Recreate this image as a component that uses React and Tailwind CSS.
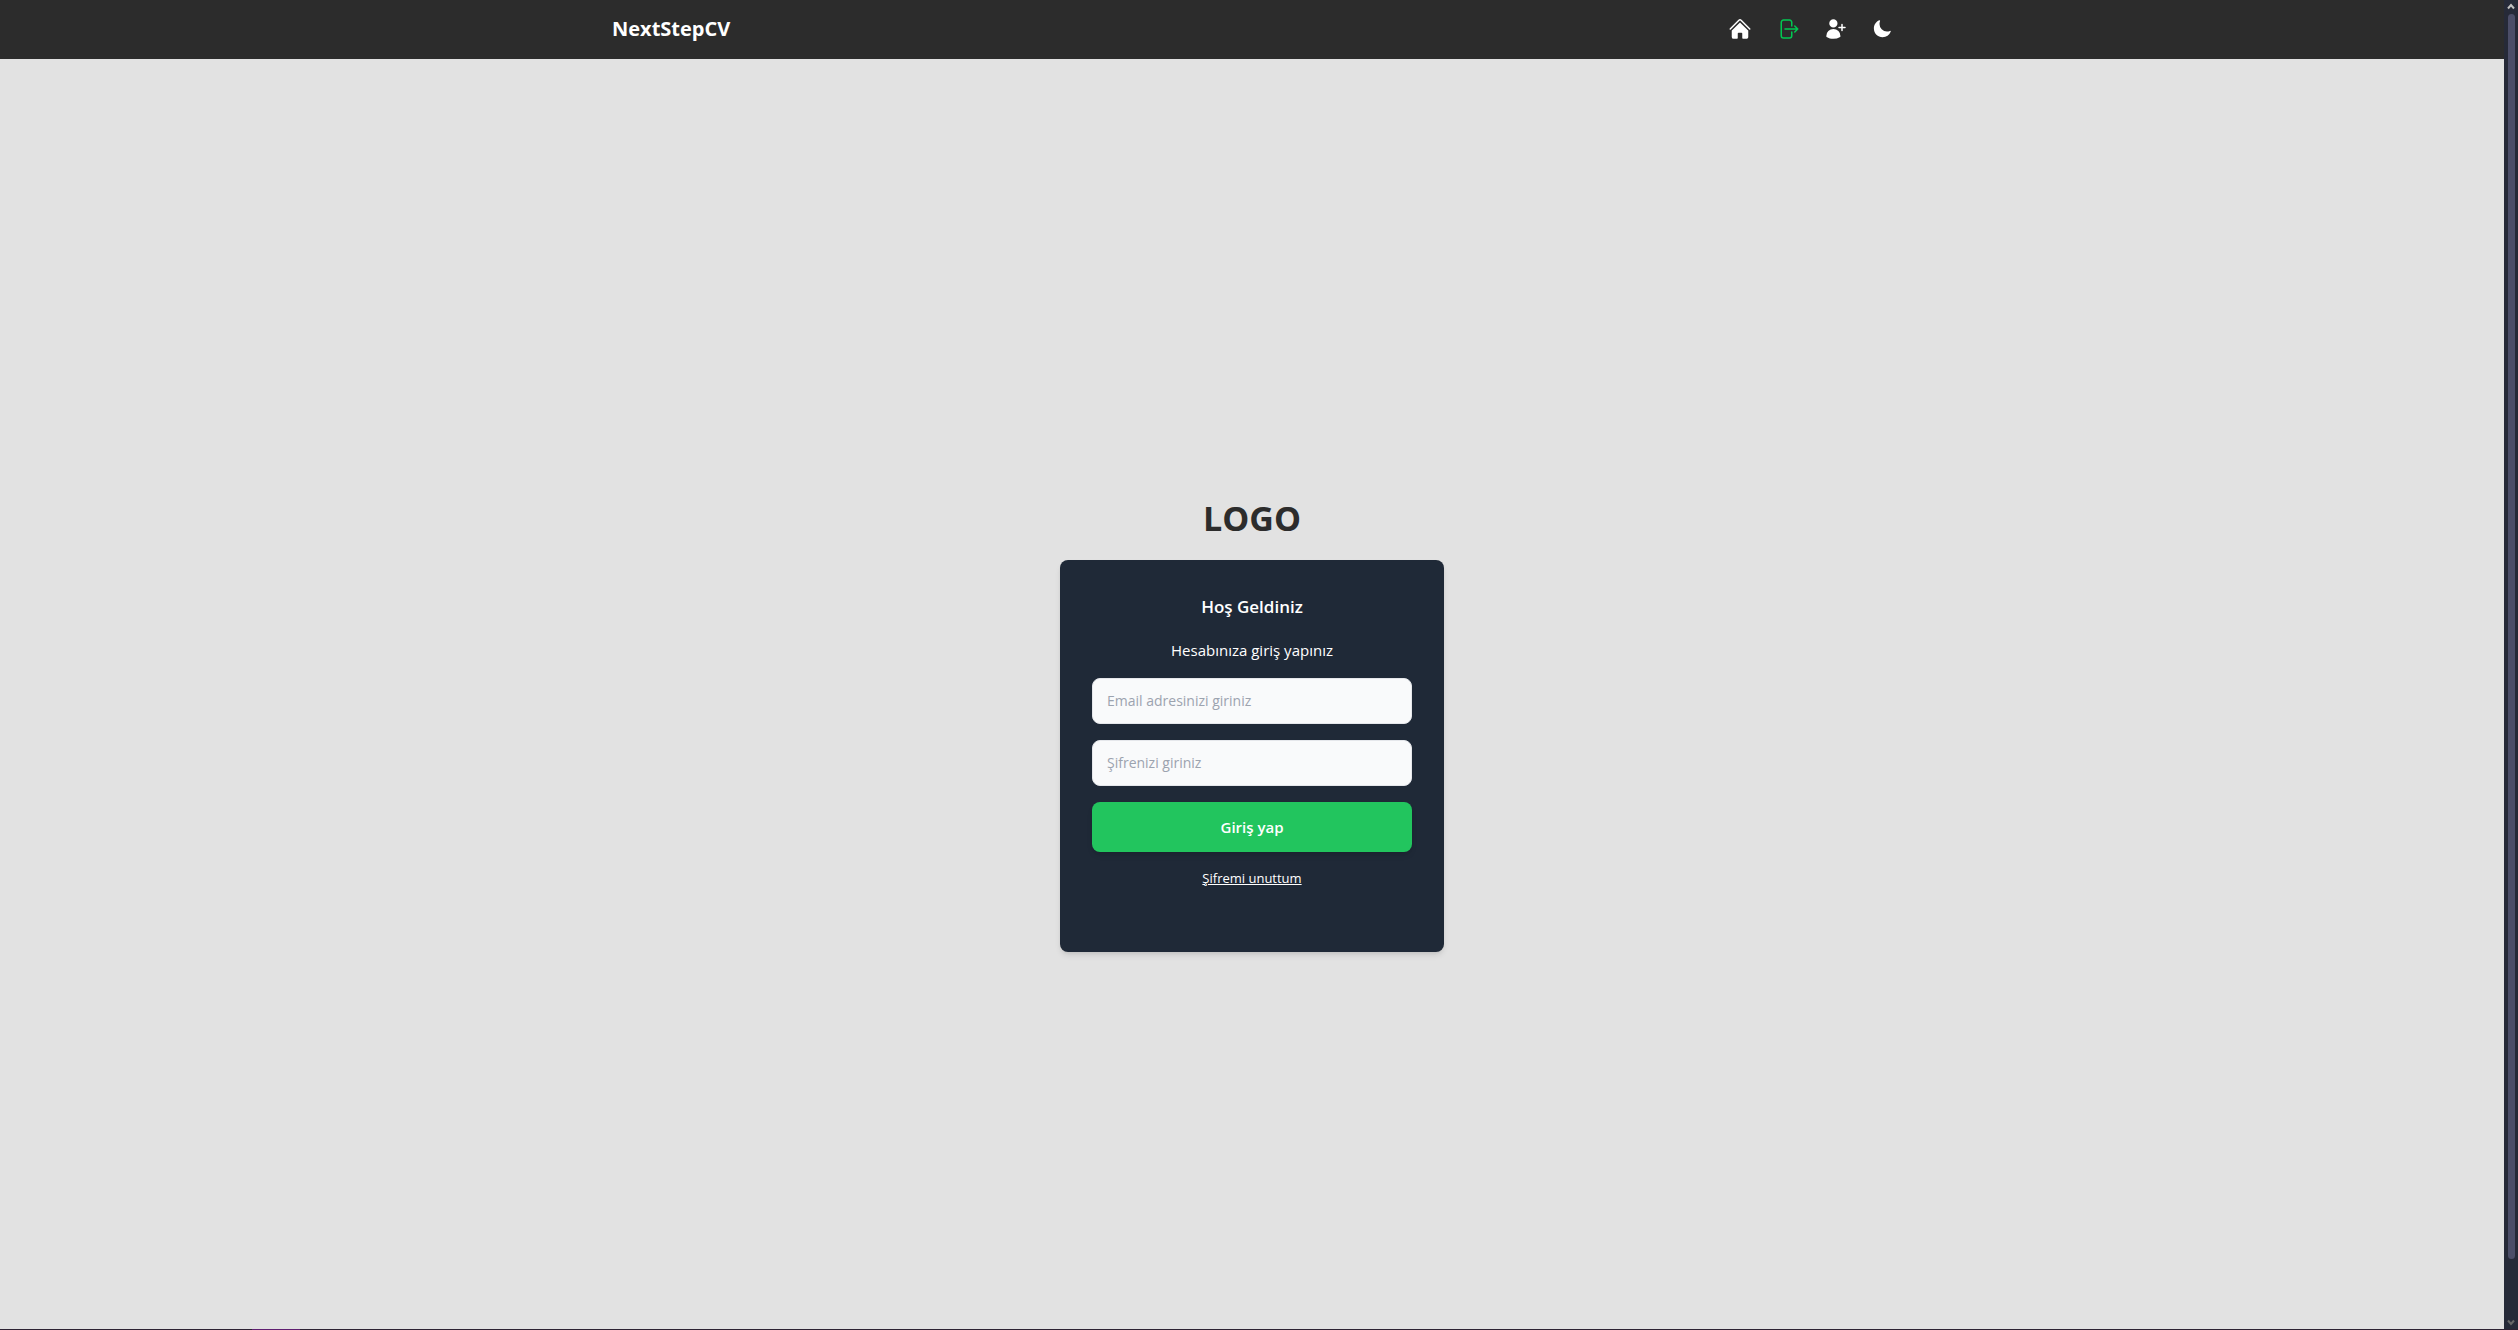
import { HiHome, HiUserPlus, HiMoon, HiOutlineArrowRightOnRectangle } from "react-icons/hi2";

function Navbar() {
  return (
    <header className="shrink-0 border-b border-[#2c2c2c] bg-[#2c2c2c]">
      <nav className="mx-auto flex h-[58px] max-w-7xl items-center justify-between text-white">
        <a href="#" className="text-[20px] leading-7 font-bold">NextStepCV</a>
        <ul className="flex items-center gap-6">
          <li><a href="#" aria-label="Ana sayfa" className="block"><HiHome className="size-6" /></a></li>
          <li><a href="#" aria-label="Giriş" className="block text-green-500"><HiOutlineArrowRightOnRectangle className="size-6" /></a></li>
          <li><a href="#" aria-label="Kayıt ol" className="block"><HiUserPlus className="size-6" /></a></li>
          <li><button type="button" aria-label="Tema" className="block"><HiMoon className="size-5" /></button></li>
        </ul>
      </nav>
    </header>
  );
}

const inputClass =
  "block w-full rounded-lg border border-gray-200 bg-[#f9fafb] px-3.5 py-3 text-[14px] leading-5 text-gray-900 placeholder:text-[#9ca3af]";

function LoginCard() {
  return (
    <main className="flex min-h-screen shrink-0 flex-col items-center justify-center">
      <h1 className="mb-5 text-[34px] leading-11 font-bold text-[#2c2c2c]">LOGO</h1>
      <section className="w-full max-w-sm rounded-lg bg-[#1f2937] px-8 pt-8 pb-16 text-center text-white shadow-md">
        <h2 className="text-[17px] leading-[30px] font-semibold">Hoş Geldiniz</h2>
        <p className="mt-4 text-[15px] leading-6">Hesabınıza giriş yapınız</p>
        <form className="mt-4 flex flex-col gap-4">
          <input type="email" aria-label="Email adresi" placeholder="Email adresinizi giriniz" className={inputClass} />
          <input type="password" aria-label="Şifre" placeholder="Şifrenizi giriniz" className={inputClass} />
          <button type="button" className="rounded-lg bg-[#22c55e] py-3 text-[15px] leading-[26px] font-semibold shadow-md">Giriş yap</button>
          <a href="#" className="text-[13px] leading-5 underline">Şifremi unuttum</a>
        </form>
      </section>
    </main>
  );
}

function Scrollbar() {
  return (
    <div aria-hidden="true" className="flex w-3.5 flex-col items-center bg-[#262a38]">
      <svg className="h-3.5 w-2" viewBox="0 0 8 14" fill="none" stroke="#c0c0c0" strokeWidth="2">
        <path d="M1 8.5 4 5l3 3.5" />
      </svg>
      <div className="mb-14 w-[7px] flex-1 rounded-full bg-[#4c4e68]" />
      <svg className="h-3.5 w-2" viewBox="0 0 8 14" fill="none" stroke="#686868" strokeWidth="2">
        <path d="M1 5.5 4 9l3-3.5" />
      </svg>
    </div>
  );
}

export default function App() {
  return (
    <div className="flex h-screen flex-col overflow-hidden font-['Open_Sans','Noto_Sans',sans-serif]">
      <div className="flex min-h-0 flex-1">
        <div className="flex flex-1 flex-col overflow-hidden bg-[#e2e2e2]">
          <Navbar />
          <LoginCard />
        </div>
        <Scrollbar />
      </div>
      <div className="flex h-px shrink-0 bg-[#2d2333]">
        <div className="ml-[10%] w-12 bg-[#5f1f70]" />
      </div>
    </div>
  );
}
